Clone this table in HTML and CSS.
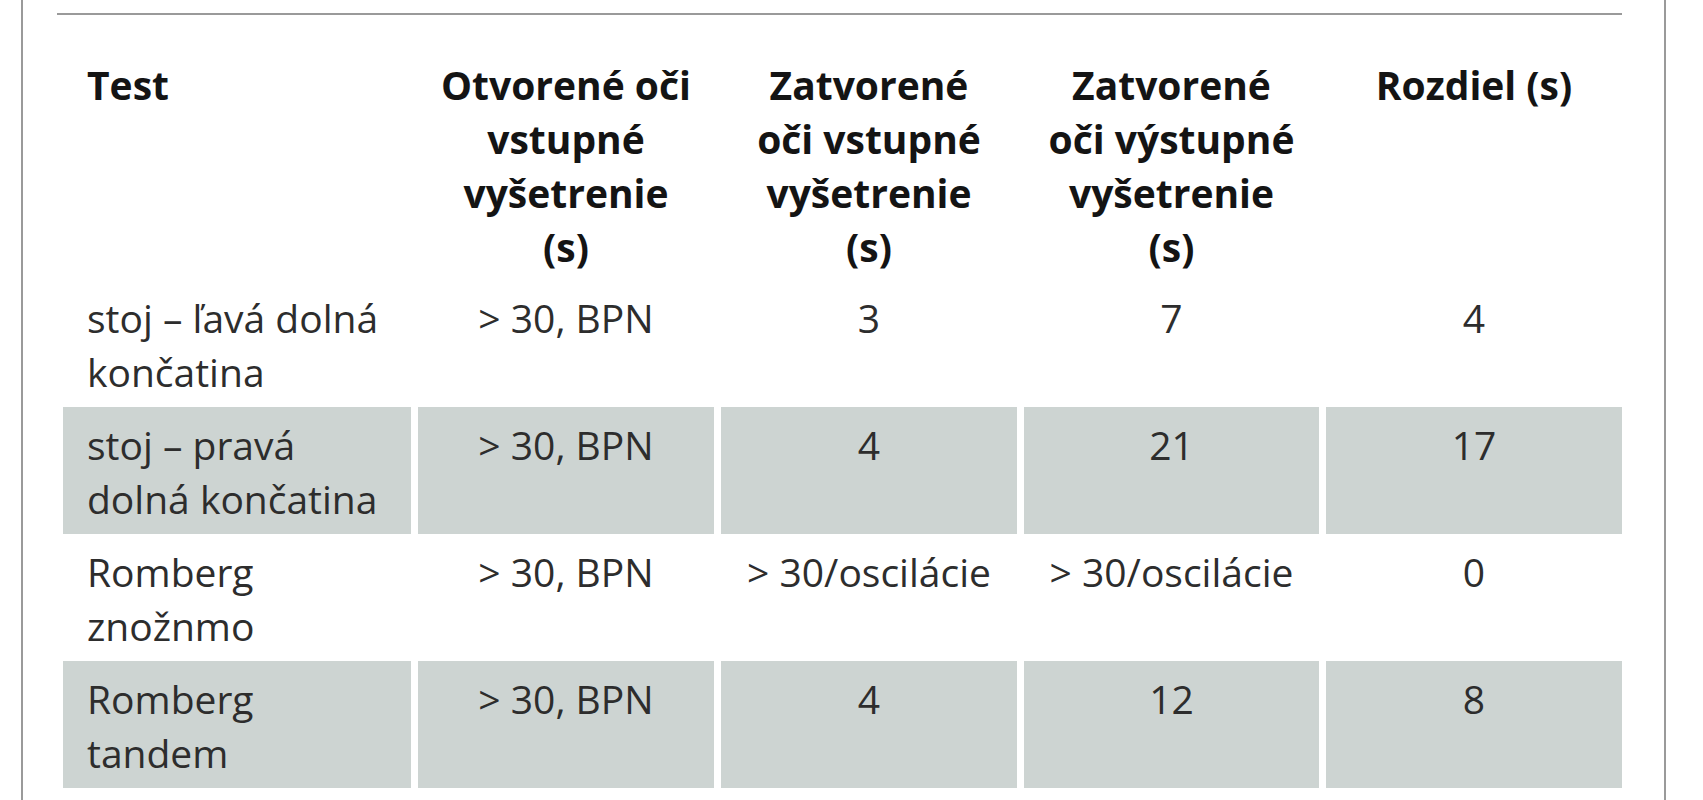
FILE: index.html
```
<!DOCTYPE html>
<html lang="sk">
<head>
<meta charset="utf-8">
<title>Tabuľka – testy rovnováhy</title>
<link rel="stylesheet" href="styles.css">
</head>
<body>
<div class="frame">
  <div class="rule"></div>
  <table class="data">
    <colgroup>
      <col class="c1"><col class="c2"><col class="c3"><col class="c4"><col class="c5">
    </colgroup>
    <thead>
      <tr>
        <th class="left">Test</th>
        <th>Otvorené oči<br>vstupné<br>vyšetrenie<br>(s)</th>
        <th>Zatvorené<br>oči vstupné<br>vyšetrenie<br>(s)</th>
        <th>Zatvorené<br>oči výstupné<br>vyšetrenie<br>(s)</th>
        <th>Rozdiel (s)</th>
      </tr>
    </thead>
    <tbody>
      <tr>
        <td class="left">stoj – ľavá dolná<br>končatina</td>
        <td>&gt; 30, BPN</td>
        <td>3</td>
        <td>7</td>
        <td>4</td>
      </tr>
      <tr class="shade">
        <td class="left">stoj – pravá<br>dolná končatina</td>
        <td>&gt; 30, BPN</td>
        <td>4</td>
        <td>21</td>
        <td>17</td>
      </tr>
      <tr>
        <td class="left">Romberg<br>znožnmo</td>
        <td>&gt; 30, BPN</td>
        <td>&gt; 30/oscilácie</td>
        <td>&gt; 30/oscilácie</td>
        <td>0</td>
      </tr>
      <tr class="shade">
        <td class="left">Romberg<br>tandem</td>
        <td>&gt; 30, BPN</td>
        <td>4</td>
        <td>12</td>
        <td>8</td>
      </tr>
    </tbody>
  </table>
</div>
</body>
</html>
```
FILE: styles.css
```
html, body {
  margin: 0;
  padding: 0;
  background: #ffffff;
}

body {
  font-family: "Open Sans", "Noto Sans", "DejaVu Sans", sans-serif;
  overflow: hidden;
}

.frame {
  margin-left: 21px;
  width: 1641px;
  height: 800px;
  border-left: 2px solid #9a9a9a;
  border-right: 2px solid #9a9a9a;
  overflow: hidden;
}

.rule {
  height: 2px;
  margin: 13px 42px 0 34px;
  background: #9a9a9a;
}

.data {
  margin-top: 32px;
  margin-left: 33px;
  border-collapse: separate;
  border-spacing: 7px 0;
  table-layout: fixed;
  width: 1573px;
}

.c1 { width: 348px; }
.c2 { width: 296px; }
.c3 { width: 296px; }
.c4 { width: 295px; }
.c5 { width: 296px; }

.data th,
.data td {
  box-sizing: border-box;
  font-size: 39px;
  line-height: 54px;
  text-align: center;
  vertical-align: top;
  padding: 11px 0 8px 0;
  white-space: nowrap;
}

.data th {
  font-weight: 700;
  color: #141414;
  padding-bottom: 6px;
}

.data td {
  font-weight: 400;
  color: #2d2d2d;
}

.data .left {
  text-align: left;
  padding-left: 24px;
}

.shade td {
  background: #cdd4d2;
}
```
